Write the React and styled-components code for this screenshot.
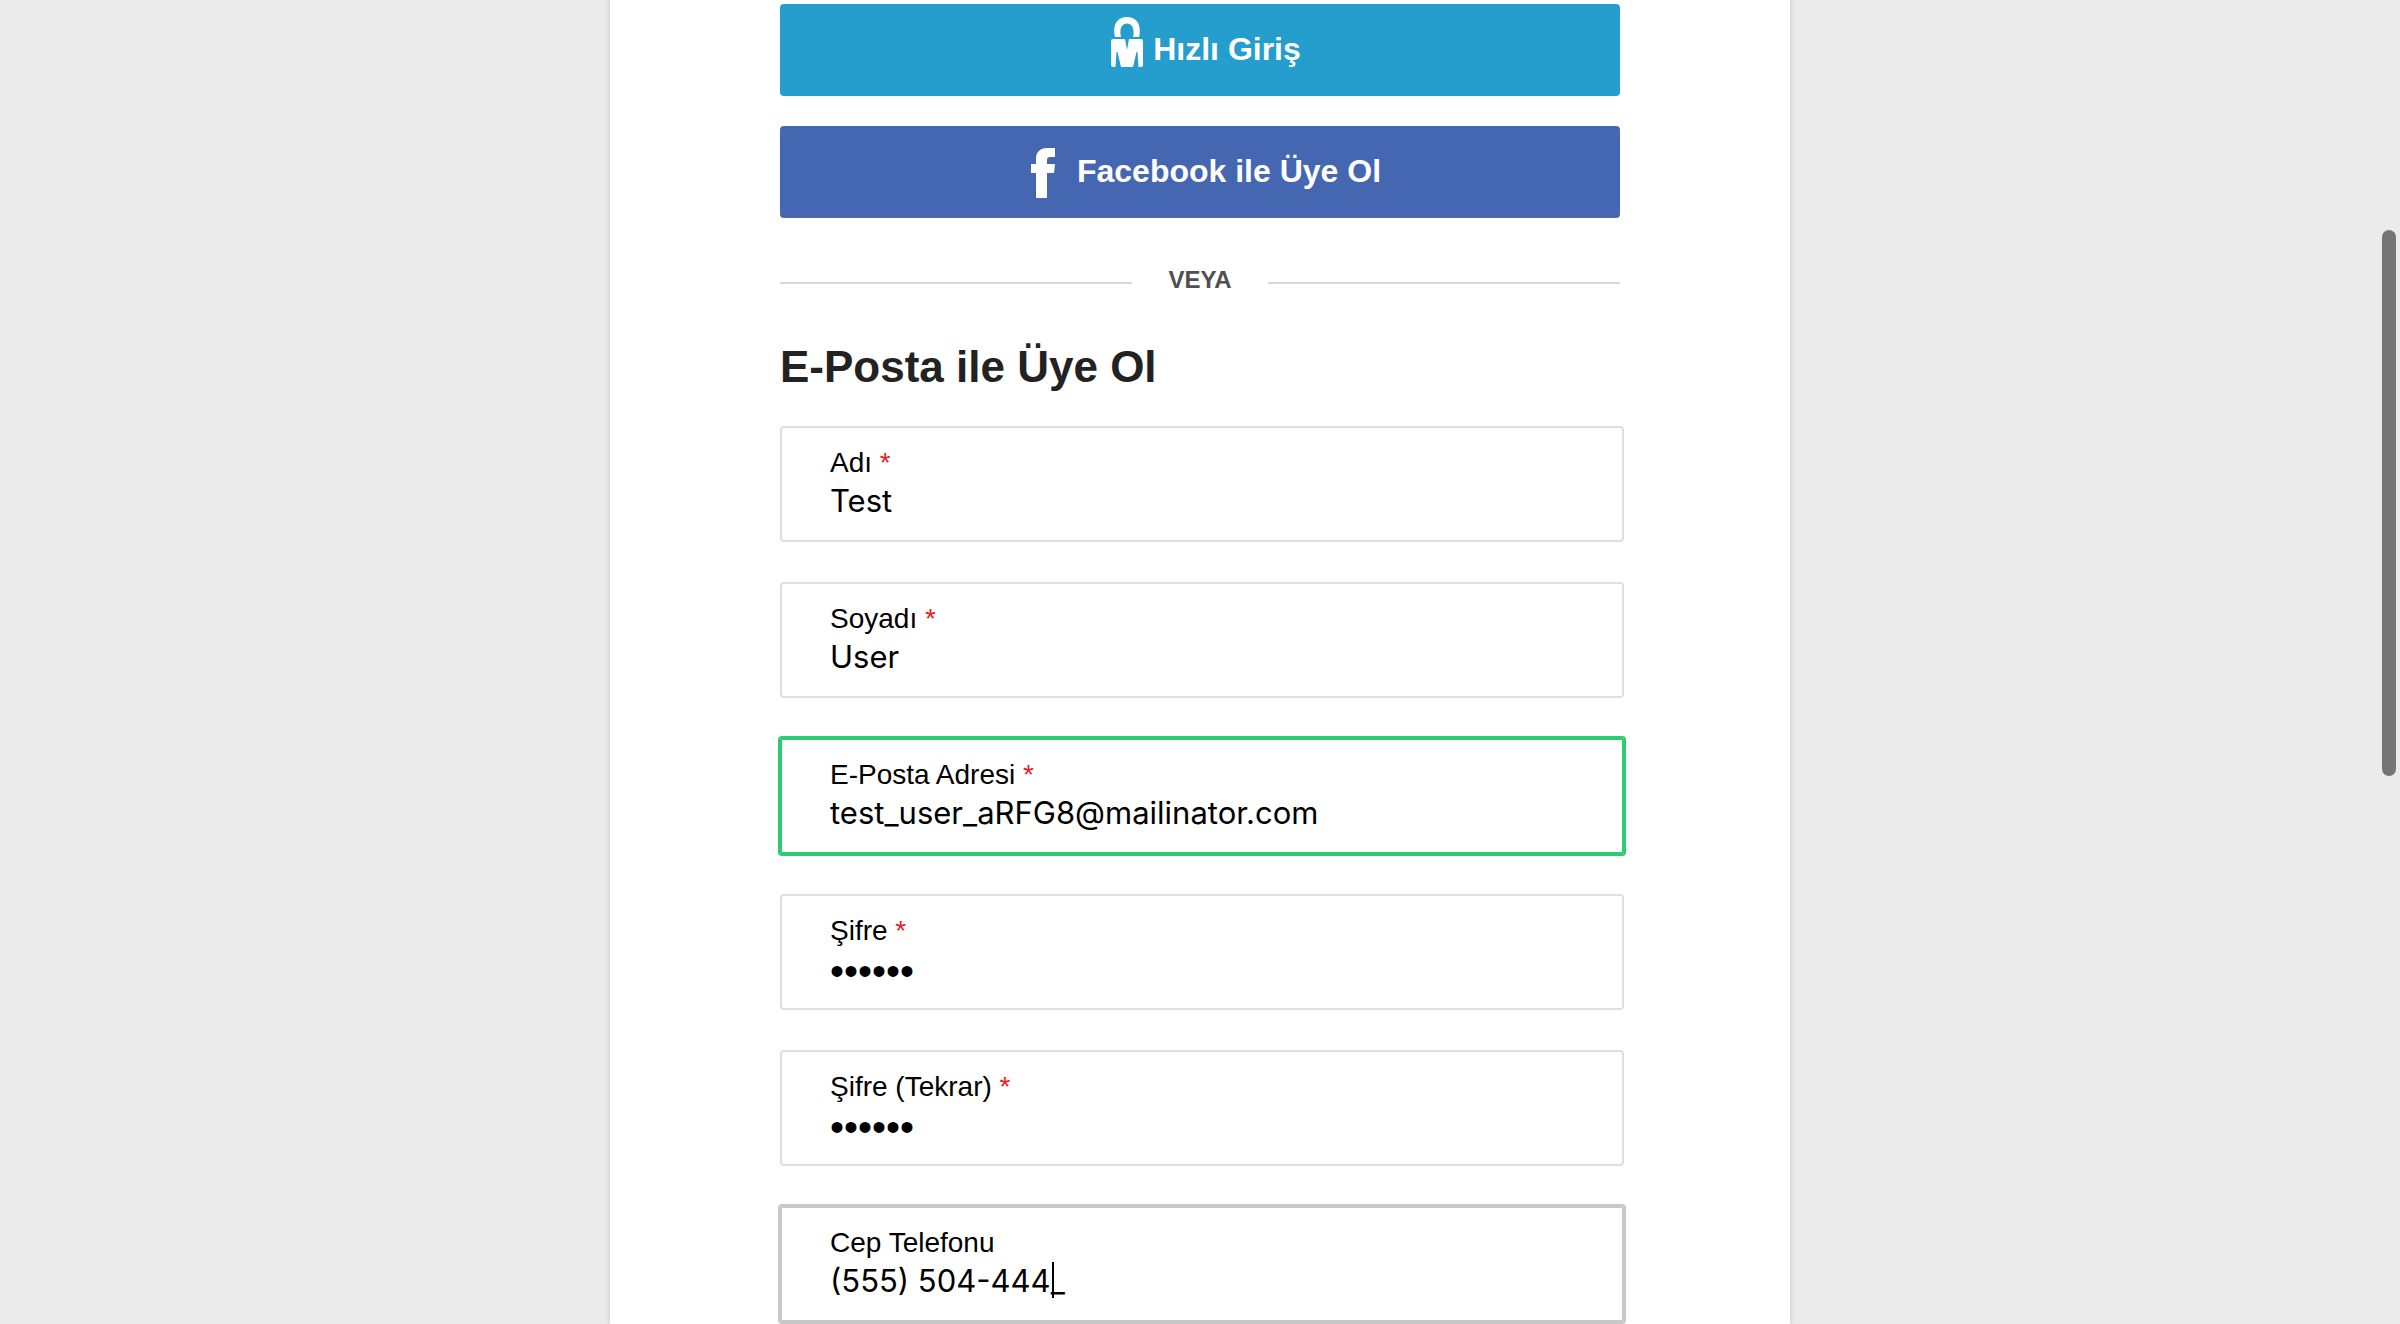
import React from "react";
import styled, { createGlobalStyle, css } from "styled-components";

const GlobalStyle = createGlobalStyle`
  *, *::before, *::after { box-sizing: border-box; }
  body {
    margin: 0;
    background: #ebebeb;
    font-family: "Liberation Sans", Arial, Helvetica, sans-serif;
    color: #000;
  }
`;

const Page = styled.div`
  display: flex;
  justify-content: center;
  min-height: 100vh;
`;

const Panel = styled.main`
  width: 100%;
  max-width: 1180px;
  padding: 4px 166px 2px 170px;
  background: #fff;
  box-shadow: 0 0 6px rgba(0, 0, 0, 0.18);
`;

const Actions = styled.div`
  display: flex;
  flex-direction: column;
  gap: 30px;
  padding-right: 4px;
`;

const SocialButton = styled.button`
  display: flex;
  align-items: center;
  justify-content: center;
  gap: ${(p) => p.$gap}px;
  height: 92px;
  padding: 0 0 2px 12px;
  border: 0;
  border-radius: 4px;
  background: ${(p) => p.$color};
  color: #fff;
  font: bold 32px/36px "Liberation Sans", Arial, sans-serif;
  cursor: pointer;
`;

const Icon = styled.svg`
  display: block;
  flex: none;
  fill: #fff;
  margin: ${(p) => p.$margin};
`;

const Divider = styled.div`
  display: flex;
  align-items: center;
  gap: 36px;
  margin: 46px 4px 0 0;
  color: #505050;
  font-size: 24px;
  font-weight: bold;
  line-height: 32px;

  &::before, &::after {
    content: "";
    flex: 1;
    height: 2px;
    margin-top: 6px;
    background: #d8d8d8;
  }
`;

const Title = styled.h1`
  margin: 45px 0 33px;
  font-size: 44px;
  line-height: 52px;
  color: #222;
`;

const Form = styled.form`
  display: flex;
  flex-direction: column;
  gap: 40px;
`;

const states = {
  valid: "#2ecc71",
  focus: "#c8c8c8",
};

const FieldBox = styled.div`
  position: relative;
  display: flex;
  flex-direction: column;
  padding: 17px 48px 19px;
  border: 2px solid #dedede;
  border-radius: 4px;
  ${(p) =>
    p.$state &&
    css`
      border-color: ${states[p.$state]};
      border-radius: 2px;
      box-shadow: 0 0 0 2px ${states[p.$state]};
    `}
`;

const Label = styled.label`
  font-size: 28px;
  line-height: 36px;
`;

const Required = styled.span`
  color: #ed1c24;
`;

const Input = styled.input`
  width: 100%;
  height: 40px;
  padding: 0;
  border: 0;
  outline: 0;
  background: transparent;
  color: #000;
  font: 31px/40px Inter, "Liberation Sans", sans-serif;
  caret-color: transparent;

  &[type="password"] {
    padding-top: 4px;
    font: 40px/40px "Liberation Sans", sans-serif;
  }
`;

const Caret = styled.span`
  position: absolute;
  left: 270px;
  bottom: 22px;
  width: 2px;
  height: 36px;
  background: #000;
`;

const ScrollThumb = styled.div`
  position: fixed;
  top: 230px;
  right: 4px;
  width: 14px;
  height: 546px;
  border-radius: 7px;
  background: #757575;
`;

const LockIcon = () => (
  <Icon $margin="0 0 14px" width="32" height="50" viewBox="0 0 32 50" aria-hidden="true">
    <path d="M4 20Q3.2 18 3.2 14C3.2 5 8 0 16 0s12.8 5 12.8 14q0 4-.8 6h-6q.6-2 .6-5c0-5-2.6-8.5-6.6-8.5S9.4 10 9.4 15q0 3 .6 5z" />
    <path d="M2 22H14L16 33 18 22H30q2 0 2 2V48q0 2-2 2H27.5L26.500 35H25.500L22 50H10L6.500 35H5.500L4.500 50H2q-2 0-2-2V24q0-2 2-2z" />
  </Icon>
);

const FacebookIcon = () => (
  <Icon $margin="4px 0 0" width="24" height="50" viewBox="0 0 24 50" aria-hidden="true">
    <path d="M5 50V25H0V16H5V11C5 4 9 0 16 0H24V9H19C17 9 16 10 16 12V16H24L23 25H16V50z" />
  </Icon>
);

const fields = [
  { id: "first-name", label: "Adı", value: "Test", required: true },
  { id: "last-name", label: "Soyadı", value: "User", required: true },
  { id: "email", label: "E-Posta Adresi", value: "test_user_aRFG8@mailinator.com", required: true, type: "email", state: "valid" },
  { id: "password", label: "Şifre", value: "secret", required: true, type: "password" },
  { id: "password-repeat", label: "Şifre (Tekrar)", value: "secret", required: true, type: "password" },
  { id: "phone", label: "Cep Telefonu", value: "(555) 504-444_", type: "tel", state: "focus" },
];

function Field({ id, label, value, required, type = "text", state }) {
  return (
    <FieldBox $state={state}>
      <Label htmlFor={id}>
        {label}
        {required && <Required> *</Required>}
      </Label>
      <Input id={id} type={type} defaultValue={value} spellCheck={false} autoComplete="off" />
      {state === "focus" && <Caret />}
    </FieldBox>
  );
}

export default function App() {
  return (
    <>
      <GlobalStyle />
      <Page>
        <Panel>
          <Actions>
            <SocialButton type="button" $color="#259ece" $gap={10}>
              <LockIcon />
              Hızlı Giriş
            </SocialButton>
            <SocialButton type="button" $color="#4566b0" $gap={22}>
              <FacebookIcon />
              Facebook ile Üye Ol
            </SocialButton>
          </Actions>
          <Divider>VEYA</Divider>
          <Title>E-Posta ile Üye Ol</Title>
          <Form>
            {fields.map((f) => (
              <Field key={f.id} {...f} />
            ))}
          </Form>
        </Panel>
      </Page>
      <ScrollThumb />
    </>
  );
}
